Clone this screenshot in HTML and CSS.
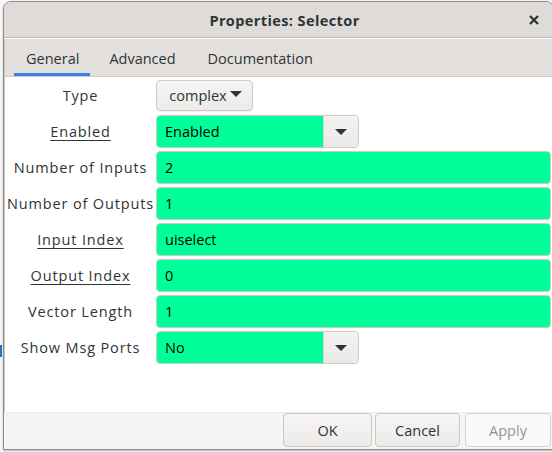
FILE: index.html
```html
<!DOCTYPE html>
<html>
<head>
<meta charset="utf-8">
<link rel="stylesheet" href="styles.css">
</head>
<body>
<div class="backdrop">
  <div class="window">
    <div class="titlebar">
      <span class="title">Properties: Selector</span>
      <span class="close">
        <svg width="10" height="10" viewBox="0 0 10 10"><path d="M1 1 L9 9 M9 1 L1 9" stroke="#2e3436" stroke-width="2.2" stroke-linecap="butt"/></svg>
      </span>
    </div>
    <div class="notebook">
      <div class="tabs">
        <div class="tab active">General</div>
        <div class="tab">Advanced</div>
        <div class="tab">Documentation</div>
      </div>
      <div class="content">
        <div class="row">
          <div class="label">Type</div>
          <div class="field-cell">
            <button class="typebtn">complex<span class="tri small"></span></button>
          </div>
        </div>
        <div class="row">
          <div class="label"><u>Enabled</u></div>
          <div class="field-cell">
            <div class="combo"><span class="combo-text">Enabled</span><span class="combo-btn"><span class="tri"></span></span></div>
          </div>
        </div>
        <div class="row">
          <div class="label">Number of Inputs</div>
          <div class="field-cell"><div class="entry">2</div></div>
        </div>
        <div class="row">
          <div class="label">Number of Outputs</div>
          <div class="field-cell"><div class="entry">1</div></div>
        </div>
        <div class="row">
          <div class="label"><u>Input Index</u></div>
          <div class="field-cell"><div class="entry">uiselect</div></div>
        </div>
        <div class="row">
          <div class="label"><u>Output Index</u></div>
          <div class="field-cell"><div class="entry">0</div></div>
        </div>
        <div class="row">
          <div class="label">Vector Length</div>
          <div class="field-cell"><div class="entry">1</div></div>
        </div>
        <div class="row">
          <div class="label">Show Msg Ports</div>
          <div class="field-cell">
            <div class="combo"><span class="combo-text">No</span><span class="combo-btn"><span class="tri"></span></span></div>
          </div>
        </div>
      </div>
    </div>
    <div class="actions">
      <button class="btn">OK</button>
      <button class="btn">Cancel</button>
      <button class="btn disabled">Apply</button>
    </div>
  </div>
  <div class="behind-mark"></div>
</div>
</body>
</html>
```
FILE: styles.css
```css
html, body {
  margin: 0;
  padding: 0;
  width: 552px;
  height: 452px;
  overflow: hidden;
  background: #f7f7f7;
  font-family: "Open Sans", "Noto Sans", sans-serif;
}
.backdrop {
  position: relative;
  width: 552px;
  height: 452px;
  padding: 1px 0 0 3px;
  box-sizing: border-box;
}
.behind-mark {
  position: absolute;
  left: 0;
  top: 345px;
  width: 2px;
  height: 12px;
  background: #2a6fc0;
}
.window {
  width: 551px;
  height: 449px;
  box-sizing: border-box;
  border: 1px solid #8e8c8a;
  border-radius: 8px 8px 0 0;
  background: #f6f5f4;
  display: flex;
  flex-direction: column;
  overflow: hidden;
  box-shadow: 0 1px 2px rgba(0,0,0,0.25);
}
.titlebar {
  height: 35px;
  flex: none;
  background: #dedbd8;
  border-bottom: 1px solid #bfbab5;
  display: flex;
  align-items: center;
  justify-content: center;
  position: relative;
}
.title {
  font-weight: bold;
  font-size: 14.5px;
  letter-spacing: 0.4px;
  color: #2e3436;
  margin-left: 12px;
  margin-top: 1px;
}
.close {
  position: absolute;
  right: 14px;
  top: 13px;
  width: 10px;
  height: 10px;
  display: flex;
}
.notebook {
  flex: none;
  border-top: 1px solid #ffffff;
  display: flex;
  flex-direction: column;
}
.tabs {
  height: 37px;
  background: #e3e0dd;
  border-left: 1px solid #c9c5c1;
  border-bottom: 1px solid #cdc9c5;
  display: flex;
  padding-left: 9px;
}
.tab {
  font-size: 14.5px;
  color: #2e3436;
  padding: 4px 16px 0 15px;
  display: flex;
  align-items: center;
  border-bottom: 3px solid transparent;
  margin-right: 1px;
}
.tab.active {
  border-bottom-color: #3584e4;
  padding-left: 12px;
  padding-right: 11px;
}
.tab:nth-child(2) { padding-left: 18px; }
.content {
  height: 335px;
  background: #ffffff;
  border-left: 1px solid #c9c5c1;
  box-sizing: border-box;
  padding: 2px 2px 0 0;
  display: flex;
  flex-direction: column;
  gap: 3px;
}
.row {
  height: 33px;
  display: grid;
  grid-template-columns: 151px 1fr;
  align-items: center;
}
.label {
  text-align: center;
  font-size: 14.5px;
  letter-spacing: 0.85px;
  color: #2e3436;
  white-space: nowrap;
}
.label u {
  text-underline-offset: 3px;
  text-decoration-thickness: 1px;
}
.field-cell {
  display: flex;
  height: 33px;
  align-items: stretch;
}
.entry {
  flex: 1;
  background: #00ff99;
  border: 1px solid #cfcac4;
  border-radius: 4px;
  box-sizing: border-box;
  font-size: 14.5px;
  color: #000;
  display: flex;
  align-items: center;
  padding-left: 8px;
}
.combo {
  width: 203px;
  display: flex;
  border: 1px solid #cfcac4;
  border-radius: 4px;
  overflow: hidden;
  box-sizing: border-box;
}
.combo-text {
  flex: 1;
  background: #00ff99;
  font-size: 14.5px;
  color: #000;
  display: flex;
  align-items: center;
  padding-left: 8px;
}
.combo-btn {
  width: 34px;
  background: linear-gradient(#f4f3f2, #ebe9e7);
  border-left: 1px solid #d8d4d0;
  display: flex;
  align-items: center;
  justify-content: center;
}
.tri {
  display: inline-block;
  width: 0;
  height: 0;
  border-left: 6px solid transparent;
  border-right: 6px solid transparent;
  border-top: 6px solid #2e3436;
}
.tri.small {
  margin-left: 3px;
  margin-bottom: 3px;
}
.typebtn {
  margin: 1px 0;
  width: 97px;
  height: 31px;
  border: 1px solid #cfcac4;
  border-radius: 4px;
  background: linear-gradient(#f6f5f4, #edebe9);
  font-family: inherit;
  font-size: 14.5px;
  color: #2e3436;
  display: flex;
  align-items: center;
  justify-content: center;
  padding: 0 0 0 2px;
  box-shadow: 0 1px 0 rgba(0,0,0,0.06);
}
.actions {
  flex: 1;
  border-top: 1px solid #ecebea;
  display: flex;
  justify-content: flex-end;
  align-items: flex-start;
  gap: 3px;
  padding: 0 2px 0 0;
  background: #f6f5f4;
}
.btn {
  height: 34px;
  width: 89px;
  border: 1px solid #cdc7c2;
  border-radius: 4px;
  background: linear-gradient(#f6f5f4, #edebe9);
  font-family: inherit;
  font-size: 14.5px;
  color: #2e3436;
  padding: 0;
}
.btn:nth-child(2) { width: 85px; }
.btn.disabled {
  width: 86px;
  margin-left: 2px;
  color: #929595;
  background: #faf9f8;
  border-color: #d6d1cd;
}
```
